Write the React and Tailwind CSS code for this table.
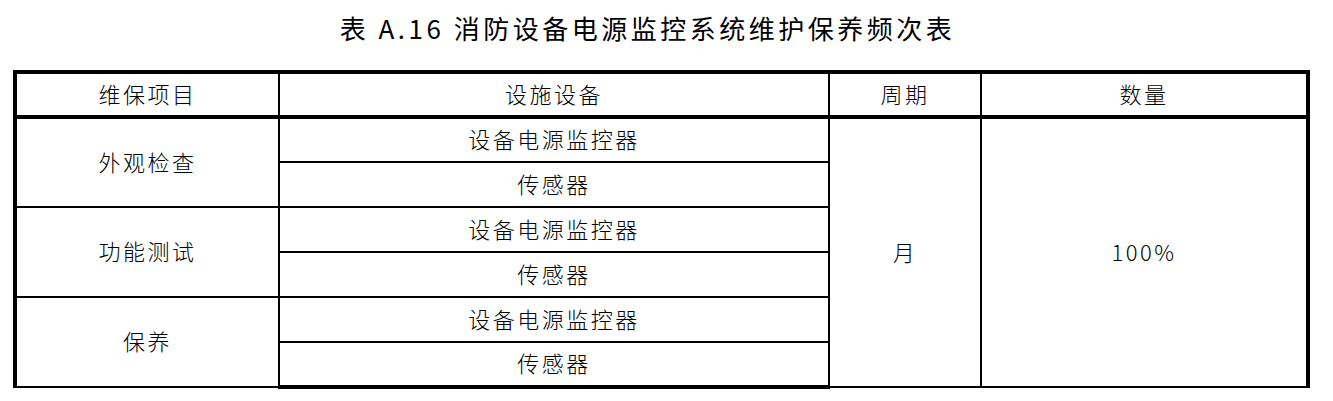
import React from "react";

const cjk = "font-['Noto_Sans_CJK_SC',sans-serif]";

const groups = [
  { name: "外观检查", items: ["设备电源监控器", "传感器"] },
  { name: "功能测试", items: ["设备电源监控器", "传感器"] },
  { name: "保养", items: ["设备电源监控器", "传感器"] },
];

const App = () => {
  return (
    <div className={`w-[1333px] h-[401px] bg-white text-black ${cjk}`}>
      <div className="h-[54px] flex items-center justify-center pr-[38px]">
        <h1 className="text-[26px] font-normal tracking-[3.5px]">
          表 A.16 消防设备电源监控系统维护保养频次表
        </h1>
      </div>
      <table className="ml-[13px] mt-[16px] w-[1297px] table-fixed border-collapse text-[22px] font-light tracking-[2.5px]">
        <colgroup>
          <col className="w-[264px]" />
          <col className="w-[550px]" />
          <col className="w-[152px]" />
          <col />
        </colgroup>
        <thead>
          <tr className="h-[45px]">
            <th className="pb-[3px] border-t-4 border-b-4 border-l-4 border-r-2 border-black font-light">
              维保项目
            </th>
            <th className="pb-[3px] border-t-4 border-b-4 border-x-2 border-black font-light">
              设施设备
            </th>
            <th className="pb-[3px] border-t-4 border-b-4 border-x-2 border-black font-light">
              周期
            </th>
            <th className="pb-[3px] border-t-4 border-b-4 border-l-2 border-r-4 border-black font-light">
              数量
            </th>
          </tr>
        </thead>
        <tbody>
          {groups.map((g, gi) =>
            g.items.map((item, ii) => {
              const last = gi === groups.length - 1 && ii === g.items.length - 1;
              return (
                <tr key={`${gi}-${ii}`} className="h-[45px]">
                  {ii === 0 && (
                    <td
                      rowSpan={2}
                      className="pb-[3px] border-l-4 border-r-2 border-y-2 border-black text-center"
                    >
                      {g.name}
                    </td>
                  )}
                  <td
                    className={`pb-[3px] border-x-2 border-t-2 border-black text-center ${
                      last ? "border-b-4" : "border-b-2"
                    }`}
                  >
                    {item}
                  </td>
                  {gi === 0 && ii === 0 && (
                    <>
                      <td rowSpan={6} className="pb-[3px] border-x-2 border-y-2 border-black text-center">
                        月
                      </td>
                      <td
                        rowSpan={6}
                        className="pb-[3px] border-l-2 border-r-4 border-y-2 border-black text-center"
                      >
                        100%
                      </td>
                    </>
                  )}
                </tr>
              );
            })
          )}
        </tbody>
      </table>
    </div>
  );
};

export default App;
